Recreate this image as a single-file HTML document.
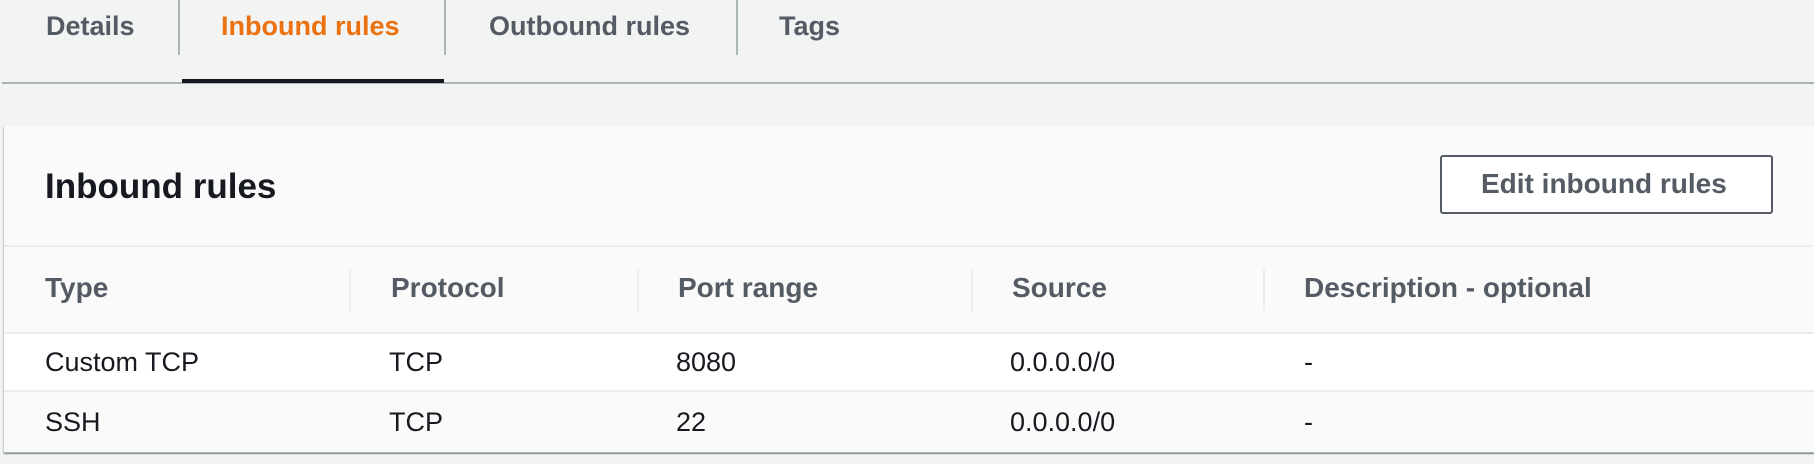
<!DOCTYPE html>
<html><head><style>
body{margin:0;width:1814px;height:464px;background:#f2f3f3;font-family:"Liberation Sans",sans-serif;position:relative;overflow:hidden}
.a{position:absolute;line-height:1;white-space:nowrap}
.tab{font-size:27px;font-weight:bold;color:#545b64;top:13px}
.vd{position:absolute;width:2px;background:#aab7b8;top:0;height:55px}
.h{font-size:28px;font-weight:bold;color:#545b64;top:274px}
.c{font-size:27px;color:#16191f}
.cd{position:absolute;width:2px;background:#eaeded;top:269px;height:42px}
</style></head><body>
<div class="a tab" style="left:46px">Details</div>
<div class="a tab" style="left:221px;color:#ec7211">Inbound rules</div>
<div class="a tab" style="left:489px">Outbound rules</div>
<div class="a tab" style="left:779px">Tags</div>
<div class="vd" style="left:178px"></div>
<div class="vd" style="left:444px"></div>
<div class="vd" style="left:736px"></div>
<div style="position:absolute;left:2px;right:0;top:82px;height:2px;background:#aab7b8"></div>
<div style="position:absolute;left:182px;width:262px;top:79px;height:4px;background:#16191f"></div>

<div style="position:absolute;left:4px;right:0;top:126px;height:326px;background:#fafafa;box-shadow:0 1px 1px rgba(0,28,36,.3),1px 1px 1px rgba(0,28,36,.15),-1px 1px 1px rgba(0,28,36,.15);border-bottom:1px solid #aab7b8"></div>
<div style="position:absolute;left:4px;right:0;top:245px;height:2px;background:#eaeded"></div>
<div style="position:absolute;left:4px;right:0;top:332px;height:60px;background:#fff;border-top:2px solid #eaeded;border-bottom:2px solid #eaeded;box-sizing:border-box"></div>

<div class="a" style="left:45px;top:169px;font-size:35px;font-weight:bold;color:#16191f">Inbound rules</div>
<div style="position:absolute;left:1440px;top:155px;width:333px;height:59px;border:2px solid #545b64;border-radius:3px;box-sizing:border-box;background:#fff"></div>
<div class="a" style="left:1481px;top:170px;font-size:28px;font-weight:bold;color:#545b64">Edit inbound rules</div>

<div class="a h" style="left:45px">Type</div>
<div class="a h" style="left:391px">Protocol</div>
<div class="a h" style="left:678px">Port range</div>
<div class="a h" style="left:1012px">Source</div>
<div class="a h" style="left:1304px">Description - optional</div>
<div class="cd" style="left:349px"></div>
<div class="cd" style="left:637px"></div>
<div class="cd" style="left:971px"></div>
<div class="cd" style="left:1263px"></div>

<div class="a c" style="left:45px;top:349px">Custom TCP</div>
<div class="a c" style="left:389px;top:349px">TCP</div>
<div class="a c" style="left:676px;top:349px">8080</div>
<div class="a c" style="left:1010px;top:349px">0.0.0.0/0</div>
<div class="a c" style="left:1304px;top:349px">-</div>
<div class="a c" style="left:45px;top:409px">SSH</div>
<div class="a c" style="left:389px;top:409px">TCP</div>
<div class="a c" style="left:676px;top:409px">22</div>
<div class="a c" style="left:1010px;top:409px">0.0.0.0/0</div>
<div class="a c" style="left:1304px;top:409px">-</div>
</body></html>
